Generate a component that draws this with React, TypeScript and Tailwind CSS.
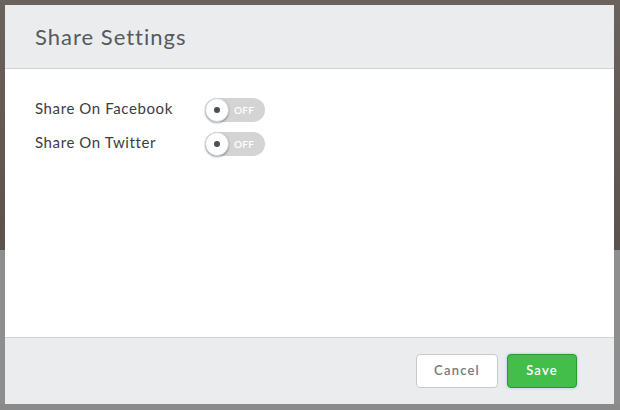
import React from "react";

function Toggle() {
  return (
    <div className="relative flex h-[24px] w-[60px] items-center rounded-full bg-[#d4d4d4]">
      <div className="z-10 flex h-[24px] w-[24px] items-center justify-center rounded-full border border-[#c9d6e0] bg-white shadow-[0_1px_2px_rgba(0,0,0,0.35)]">
        <div className="h-[6px] w-[6px] rounded-full bg-[#4a4f55]" />
      </div>
      <span className="ml-[5px] text-[10px] font-semibold tracking-[0.3px] text-white">OFF</span>
    </div>
  );
}

export default function App() {
  return (
    <div
      className="flex h-[410px] w-[620px] bg-[linear-gradient(to_bottom,#6a625d_0,#5c524d_250px,#8e8e8e_250px,#8e8e8e_403px,#8a8a8a_404px)] pb-[6px] pl-[5px] pr-[6px] pt-[5px]"
      style={{ fontFamily: "Lato, 'Open Sans', sans-serif" }}
    >
      <div className="flex flex-1 flex-col bg-white">
        <div className="flex h-[64px] items-center border-b border-[#cfd1d4] bg-[#ebecee] pl-[30px]">
          <h1 className="text-[22px] font-normal tracking-[1px] text-[#56595d]">Share Settings</h1>
        </div>
        <div className="flex flex-1 flex-col gap-[6px] px-[30px] pt-[25px]">
          <div className="flex items-center">
            <span className="w-[170px] text-[15px] tracking-[0.6px] text-[#3a3d40]">Share On Facebook</span>
            <div className="mt-[4px]"><Toggle /></div>
          </div>
          <div className="flex items-center">
            <span className="w-[170px] text-[15px] tracking-[0.6px] text-[#3a3d40]">Share On Twitter</span>
            <div className="mt-[4px]"><Toggle /></div>
          </div>
        </div>
        <div className="flex h-[67px] items-center justify-end gap-[9px] border-t border-[#cfd1d4] bg-[#ebecee] pr-[37px]">
          <button className="h-[34px] w-[82px] rounded-[4px] border border-[#c8c9cb] bg-white text-[13px] font-semibold tracking-[1.2px] text-[#77797c]">
            Cancel
          </button>
          <button className="h-[34px] w-[70px] rounded-[4px] border border-[#259a2d] bg-[#44be4b] text-[13px] font-semibold tracking-[1.2px] text-white shadow-[0_0_3px_rgba(120,170,230,0.6)]">
            Save
          </button>
        </div>
      </div>
    </div>
  );
}
